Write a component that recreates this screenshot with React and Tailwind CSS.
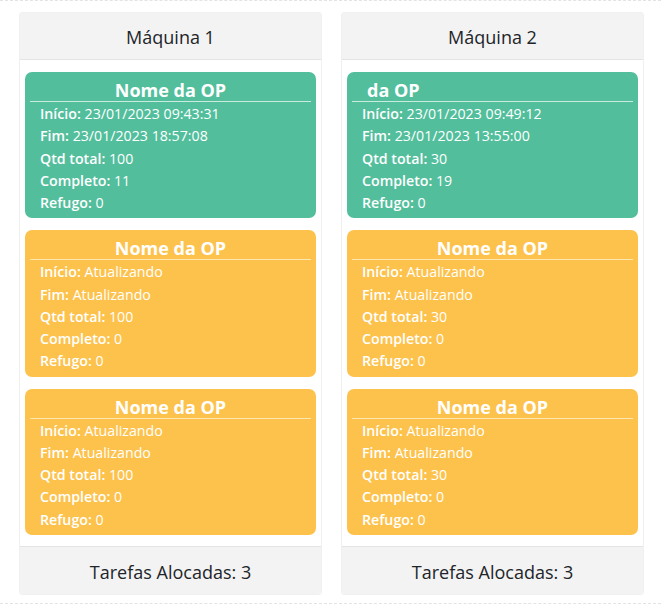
import React from 'react';

const machines = [
  {
    name: 'Máquina 1',
    ops: [
      { title: 'Nome da OP', inicio: '23/01/2023 09:43:31', fim: '23/01/2023 18:57:08', total: 100, completo: 11, refugo: 0, status: 'running' },
      { title: 'Nome da OP', inicio: 'Atualizando', fim: 'Atualizando', total: 100, completo: 0, refugo: 0, status: 'queued' },
      { title: 'Nome da OP', inicio: 'Atualizando', fim: 'Atualizando', total: 100, completo: 0, refugo: 0, status: 'queued' },
    ],
  },
  {
    name: 'Máquina 2',
    ops: [
      { title: 'da OP', inicio: '23/01/2023 09:49:12', fim: '23/01/2023 13:55:00', total: 30, completo: 19, refugo: 0, status: 'running', scrolled: true },
      { title: 'Nome da OP', inicio: 'Atualizando', fim: 'Atualizando', total: 30, completo: 0, refugo: 0, status: 'queued' },
      { title: 'Nome da OP', inicio: 'Atualizando', fim: 'Atualizando', total: 30, completo: 0, refugo: 0, status: 'queued' },
    ],
  },
];

const Row = ({ label, value }) => (
  <div className="leading-[22.25px] text-[14.2px]">
    <span className="font-semibold">{label}:</span> {value}
  </div>
);

const OpCard = ({ op }) => {
  const running = op.status === 'running';
  return (
    <div
      className={`rounded-[7px] pt-[7px] pb-[4px] text-white ${running ? 'bg-[#52be9c]' : 'bg-[#fdc24c]'}`}
    >
      <div className="mx-[5px]">
        <h3
          className={`text-[18px] font-bold leading-[22px] ${op.scrolled ? 'text-left pl-[15px]' : 'text-center'}`}
        >
          {op.title}
        </h3>
        <hr className={`border-0 h-px ${running ? 'bg-[#c9ecdf]' : 'bg-[#fde6b0]'}`} />
      </div>
      <div className="px-[15px] pt-[1px]">
        <Row label="Início" value={op.inicio} />
        <Row label="Fim" value={op.fim} />
        <Row label="Qtd total" value={op.total} />
        <Row label="Completo" value={op.completo} />
        <Row label="Refugo" value={op.refugo} />
      </div>
    </div>
  );
};

export default function App() {
  return (
    <div
      className="w-[661px] h-[604px] bg-white border-t border-b border-dashed border-[#e3e3e3] text-[#212529]"
      style={{ fontFamily: '"Open Sans", "Noto Sans", sans-serif' }}
    >
      <div className="flex gap-[19px] pl-[19px] pt-[11px]">
        {machines.map((m) => (
          <div key={m.name} className="w-[303px] flex flex-col rounded-[3px] border border-[#f0f0f0] bg-white">
            <div className="h-[47px] flex items-center justify-center bg-[#f3f3f3] border-b border-[#e4e4e4] text-[18px] pt-[3px]">
              {m.name}
            </div>
            <div className="flex flex-col gap-3 px-[5px] pt-3 pb-[11px]">
              {m.ops.map((op, i) => (
                <OpCard key={i} op={op} />
              ))}
            </div>
            <div className="h-[48px] flex items-center justify-center bg-[#f3f3f3] border-t border-[#e4e4e4] text-[18px] pt-[4px] rounded-b-[3px]">
              Tarefas Alocadas: {m.ops.length}
            </div>
          </div>
        ))}
      </div>
    </div>
  );
}
